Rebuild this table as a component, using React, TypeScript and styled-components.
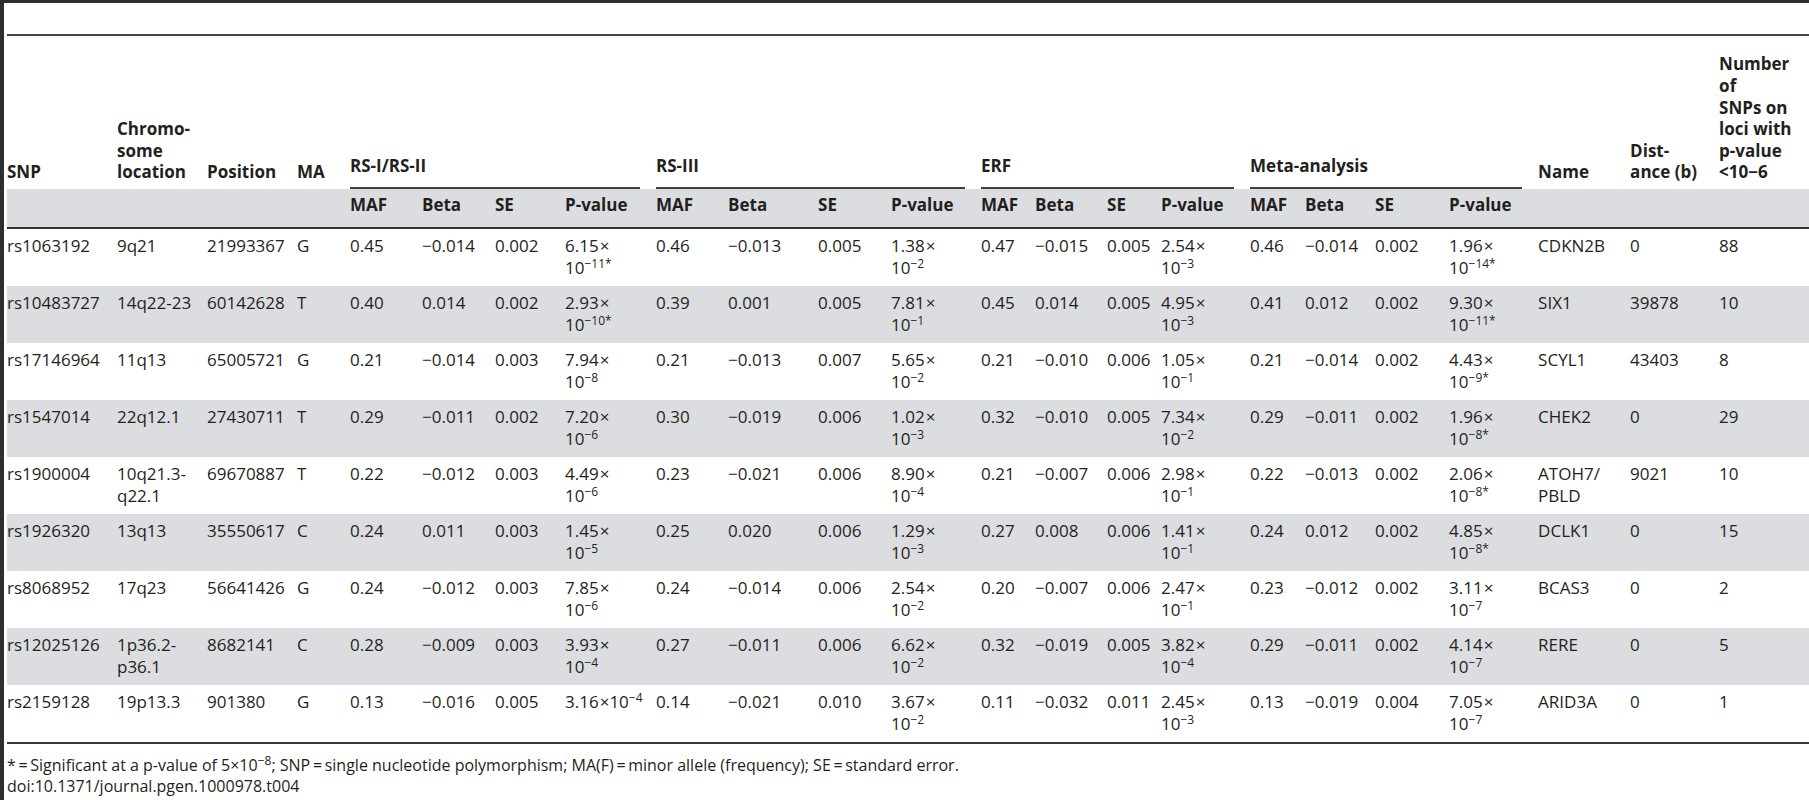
import React from "react";
import styled, { createGlobalStyle } from "styled-components";

const GlobalStyle = createGlobalStyle`
  html, body {
    margin: 0;
    padding: 0;
    background: #ffffff;
  }
  body {
    font-family: "Open Sans", "Liberation Sans", sans-serif;
    color: #231f20;
  }
`;

const Frame = styled.div`
  width: 1809px;
  height: 800px;
  box-sizing: border-box;
  border-top: 3px solid #2e2e2e;
  border-left: 4px solid #2e2e2e;
  padding: 31px 0 0 3px;
  overflow: hidden;
`;

const Table = styled.table`
  width: 1802px;
  table-layout: fixed;
  border-collapse: separate;
  border-spacing: 0;
  font-size: 17px;
  line-height: 21.6px;
  border-top: 2px solid #454545;
  border-bottom: 2px solid #3a3a3a;
`;

const HeadRow = styled.tr`
  height: 153px;
`;

const HeadCell = styled.th`
  vertical-align: bottom;
  text-align: left;
  font-weight: 700;
  padding: 0 0 6px 0;
  white-space: nowrap;
`;

const GroupCell = styled.th`
  vertical-align: bottom;
  text-align: left;
  font-weight: 700;
  padding: 0 16px 0 0;
  white-space: nowrap;
`;

const GroupLabel = styled.div`
  padding-bottom: 10px;
  border-bottom: 2px solid #3f3f3f;
`;

const SubRow = styled.tr`
  height: 40px;
  background: #dcdde0;
`;

const SubCell = styled.th`
  vertical-align: top;
  text-align: left;
  font-weight: 700;
  padding: 5px 0 0 0;
  border-bottom: 2px solid #333333;
  white-space: nowrap;
`;

const Row = styled.tr<{ $shade: boolean }>`
  height: 57px;
  background: ${(p) => (p.$shade ? "#dcdde0" : "transparent")};
`;

const Cell = styled.td`
  vertical-align: top;
  text-align: left;
  padding: 6px 0 0 0;
  white-space: nowrap;
`;

const Sup = styled.sup`
  font-size: 12px;
  line-height: 0;
  vertical-align: 6px;
`;

const Times = styled.span`
  margin-left: 1px;
`;

const Notes = styled.div`
  font-size: 16px;
  line-height: 21px;
  padding: 11px 0 0 0;
`;

const M = "\u2212";

type PVal = { m: string; e: string; star?: boolean; one?: boolean };
type Group = [string, string, string, PVal];
type RowData = {
  snp: string;
  loc: string[];
  pos: string;
  ma: string;
  g: Group[];
  name: string[];
  dist: string;
  n: string;
};

const p = (m: string, e: string, star = false, one = false): PVal => ({ m, e, star, one });

const widths = [
  110, 90, 90, 53, 72, 73, 70, 91, 72, 90, 73, 90, 54, 72, 54, 89, 55, 70, 74, 89, 92, 89, 90,
];

const groups = ["RS-I/RS-II", "RS-III", "ERF", "Meta-analysis"];

const rows: RowData[] = [
  {
    snp: "rs1063192", loc: ["9q21"], pos: "21993367", ma: "G",
    g: [
      ["0.45", M + "0.014", "0.002", p("6.15", M + "11", true)],
      ["0.46", M + "0.013", "0.005", p("1.38", M + "2")],
      ["0.47", M + "0.015", "0.005", p("2.54", M + "3")],
      ["0.46", M + "0.014", "0.002", p("1.96", M + "14", true)],
    ],
    name: ["CDKN2B"], dist: "0", n: "88",
  },
  {
    snp: "rs10483727", loc: ["14q22-23"], pos: "60142628", ma: "T",
    g: [
      ["0.40", "0.014", "0.002", p("2.93", M + "10", true)],
      ["0.39", "0.001", "0.005", p("7.81", M + "1")],
      ["0.45", "0.014", "0.005", p("4.95", M + "3")],
      ["0.41", "0.012", "0.002", p("9.30", M + "11", true)],
    ],
    name: ["SIX1"], dist: "39878", n: "10",
  },
  {
    snp: "rs17146964", loc: ["11q13"], pos: "65005721", ma: "G",
    g: [
      ["0.21", M + "0.014", "0.003", p("7.94", M + "8")],
      ["0.21", M + "0.013", "0.007", p("5.65", M + "2")],
      ["0.21", M + "0.010", "0.006", p("1.05", M + "1")],
      ["0.21", M + "0.014", "0.002", p("4.43", M + "9", true)],
    ],
    name: ["SCYL1"], dist: "43403", n: "8",
  },
  {
    snp: "rs1547014", loc: ["22q12.1"], pos: "27430711", ma: "T",
    g: [
      ["0.29", M + "0.011", "0.002", p("7.20", M + "6")],
      ["0.30", M + "0.019", "0.006", p("1.02", M + "3")],
      ["0.32", M + "0.010", "0.005", p("7.34", M + "2")],
      ["0.29", M + "0.011", "0.002", p("1.96", M + "8", true)],
    ],
    name: ["CHEK2"], dist: "0", n: "29",
  },
  {
    snp: "rs1900004", loc: ["10q21.3-", "q22.1"], pos: "69670887", ma: "T",
    g: [
      ["0.22", M + "0.012", "0.003", p("4.49", M + "6")],
      ["0.23", M + "0.021", "0.006", p("8.90", M + "4")],
      ["0.21", M + "0.007", "0.006", p("2.98", M + "1")],
      ["0.22", M + "0.013", "0.002", p("2.06", M + "8", true)],
    ],
    name: ["ATOH7/", "PBLD"], dist: "9021", n: "10",
  },
  {
    snp: "rs1926320", loc: ["13q13"], pos: "35550617", ma: "C",
    g: [
      ["0.24", "0.011", "0.003", p("1.45", M + "5")],
      ["0.25", "0.020", "0.006", p("1.29", M + "3")],
      ["0.27", "0.008", "0.006", p("1.41", M + "1")],
      ["0.24", "0.012", "0.002", p("4.85", M + "8", true)],
    ],
    name: ["DCLK1"], dist: "0", n: "15",
  },
  {
    snp: "rs8068952", loc: ["17q23"], pos: "56641426", ma: "G",
    g: [
      ["0.24", M + "0.012", "0.003", p("7.85", M + "6")],
      ["0.24", M + "0.014", "0.006", p("2.54", M + "2")],
      ["0.20", M + "0.007", "0.006", p("2.47", M + "1")],
      ["0.23", M + "0.012", "0.002", p("3.11", M + "7")],
    ],
    name: ["BCAS3"], dist: "0", n: "2",
  },
  {
    snp: "rs12025126", loc: ["1p36.2-", "p36.1"], pos: "8682141", ma: "C",
    g: [
      ["0.28", M + "0.009", "0.003", p("3.93", M + "4")],
      ["0.27", M + "0.011", "0.006", p("6.62", M + "2")],
      ["0.32", M + "0.019", "0.005", p("3.82", M + "4")],
      ["0.29", M + "0.011", "0.002", p("4.14", M + "7")],
    ],
    name: ["RERE"], dist: "0", n: "5",
  },
  {
    snp: "rs2159128", loc: ["19p13.3"], pos: "901380", ma: "G",
    g: [
      ["0.13", M + "0.016", "0.005", p("3.16", M + "4", false, true)],
      ["0.14", M + "0.021", "0.010", p("3.67", M + "2")],
      ["0.11", M + "0.032", "0.011", p("2.45", M + "3")],
      ["0.13", M + "0.019", "0.004", p("7.05", M + "7")],
    ],
    name: ["ARID3A"], dist: "0", n: "1",
  },
];

const Lines: React.FC<{ parts: string[] }> = ({ parts }) => (
  <>
    {parts.map((t, i) => (
      <React.Fragment key={i}>
        {i > 0 && <br />}
        {t}
      </React.Fragment>
    ))}
  </>
);

const PValue: React.FC<{ v: PVal }> = ({ v }) => (
  <>
    {v.m}
    <Times>{"\u00d7"}</Times>
    {!v.one && <br />}
    10
    <Sup>
      {v.e}
      {v.star ? "*" : ""}
    </Sup>
  </>
);

const App: React.FC = () => {
  return (
    <Frame>
      <GlobalStyle />
      <Table>
        <colgroup>
          {widths.map((w, i) => (
            <col key={i} style={{ width: w }} />
          ))}
        </colgroup>
        <thead>
          <HeadRow>
            <HeadCell>SNP</HeadCell>
            <HeadCell>
              <Lines parts={["Chromo-", "some", "location"]} />
            </HeadCell>
            <HeadCell>Position</HeadCell>
            <HeadCell>MA</HeadCell>
            {groups.map((g) => (
              <GroupCell key={g} colSpan={4}>
                <GroupLabel>{g}</GroupLabel>
              </GroupCell>
            ))}
            <HeadCell>Name</HeadCell>
            <HeadCell>
              <Lines parts={["Dist-", "ance (b)"]} />
            </HeadCell>
            <HeadCell>
              <Lines parts={["Number", "of", "SNPs on", "loci with", "p-value", "<10\u22126"]} />
            </HeadCell>
          </HeadRow>
          <SubRow>
            <SubCell />
            <SubCell />
            <SubCell />
            <SubCell />
            {groups.map((g) =>
              ["MAF", "Beta", "SE", "P-value"].map((s) => <SubCell key={g + s}>{s}</SubCell>)
            )}
            <SubCell />
            <SubCell />
            <SubCell />
          </SubRow>
        </thead>
        <tbody>
          {rows.map((r, i) => (
            <Row key={r.snp} $shade={i % 2 === 1}>
              <Cell>{r.snp}</Cell>
              <Cell>
                <Lines parts={r.loc} />
              </Cell>
              <Cell>{r.pos}</Cell>
              <Cell>{r.ma}</Cell>
              {r.g.map((g, j) => (
                <React.Fragment key={j}>
                  <Cell>{g[0]}</Cell>
                  <Cell>{g[1]}</Cell>
                  <Cell>{g[2]}</Cell>
                  <Cell>
                    <PValue v={g[3]} />
                  </Cell>
                </React.Fragment>
              ))}
              <Cell>
                <Lines parts={r.name} />
              </Cell>
              <Cell>{r.dist}</Cell>
              <Cell>{r.n}</Cell>
            </Row>
          ))}
        </tbody>
      </Table>
      <Notes>
        *{"\u2009=\u2009"}Significant at a p-value of 5{"\u00d7"}10<Sup>{M}8</Sup>; SNP{"\u2009=\u2009"}single
        nucleotide polymorphism; MA(F){"\u2009=\u2009"}minor allele (frequency); SE{"\u2009=\u2009"}standard error.
        <br />
        doi:10.1371/journal.pgen.1000978.t004
      </Notes>
    </Frame>
  );
};

export default App;
